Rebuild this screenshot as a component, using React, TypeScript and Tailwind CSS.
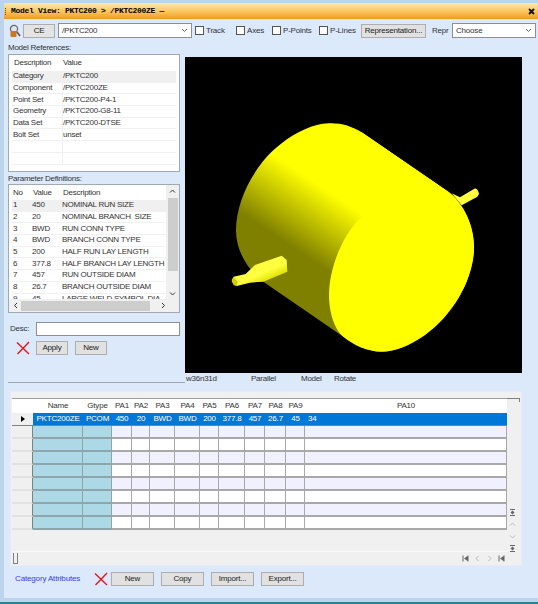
import type { ReactNode } from 'react';

const modelRefs = [
  ['Category', '/PKTC200'],
  ['Component', '/PKTC200ZE'],
  ['Point Set', '/PKTC200-P4-1'],
  ['Geometry', '/PKTC200-G8-11'],
  ['Data Set', '/PKTC200-DTSE'],
  ['Bolt Set', 'unset'],
  ['', ''],
  ['', ''],
];

const params = [
  ['1', '450', 'NOMINAL RUN SIZE'],
  ['2', '20', 'NOMINAL BRANCH  SIZE'],
  ['3', 'BWD', 'RUN CONN TYPE'],
  ['4', 'BWD', 'BRANCH CONN TYPE'],
  ['5', '200', 'HALF RUN LAY LENGTH'],
  ['6', '377.8', 'HALF BRANCH LAY LENGTH'],
  ['7', '457', 'RUN OUTSIDE DIAM'],
  ['8', '26.7', 'BRANCH OUTSIDE DIAM'],
  ['9', '45', 'LARGE WELD SYMBOL DIA'],
];

const gridCols = 'grid grid-cols-[21px_50px_29px_20px_18px_25px_25px_19px_26px_20px_21px_19px_202px]';
const headers = ['', 'Name', 'Gtype', 'PA1', 'PA2', 'PA3', 'PA4', 'PA5', 'PA6', 'PA7', 'PA8', 'PA9', 'PA10'];
const selected = ['', 'PKTC200ZE', 'PCOM', '450', '20', 'BWD', 'BWD', '200', '377.8', '457', '26.7', '45', '34'];

function Btn({ className, children }: { className: string; children: ReactNode }) {
  return (
    <button className={`h-[14px] bg-[#e1e1e1] border border-[#adadad] text-[8px] tracking-[-0.2px] leading-none text-[#222] whitespace-nowrap flex items-center justify-center ${className}`}>
      {children}
    </button>
  );
}

function Check({ label, className }: { label: string; className: string }) {
  return (
    <label className={`flex items-center gap-[2px] text-[8px] tracking-[-0.2px] text-[#333] whitespace-nowrap ${className}`}>
      <span className="w-[9px] h-[9px] bg-white border border-[#555] shrink-0" />
      {label}
    </label>
  );
}

function Combo({ value, className }: { value: string; className: string }) {
  return (
    <div className={`h-[15px] bg-white border border-[#8f8f8f] flex items-center justify-between pl-[3px] pr-[3px] text-[8px] tracking-[-0.2px] text-[#333] ${className}`}>
      <span>{value}</span>
      <svg width="7" height="5" viewBox="0 0 7 5" fill="none" stroke="#666" strokeWidth="1">
        <path d="M1 1l2.5 2.5L6 1" />
      </svg>
    </div>
  );
}

function RedX({ className }: { className: string }) {
  return (
    <svg className={className} width="14" height="14" viewBox="0 0 14 14" fill="none" stroke="#e8141c" strokeWidth="1.4">
      <path d="M1 1.5l12 11.5M13 1L1.5 13" />
    </svg>
  );
}

function Chevron({ d, color = '#333' }: { d: string; color?: string }) {
  return (
    <svg width="7" height="7" viewBox="0 0 7 7" fill="none" stroke={color} strokeWidth="1">
      <path d={d} />
    </svg>
  );
}

function NavEnd({ vertical }: { vertical?: boolean }) {
  return (
    <svg width="7" height="7" viewBox="0 0 7 7" fill="#666">
      {vertical ? <path d="M1 0h5v1H1zM1 6h5v1H1zM3.5 1.5L5.5 3.5L3.5 5.5L1.5 3.5z" /> : <path d="M0.5 0.5h1v6h-1zM5.5 0.5h1v6h-1zM2 3.5L5.5 1v5z" />}
    </svg>
  );
}

function Scene() {
  return (
    <svg className="w-full h-full block" viewBox="0 -129 1011 948">
      <defs>
        <linearGradient id="shell" gradientUnits="userSpaceOnUse" x1="295" y1="185" x2="185" y2="350">
          <stop offset="0" stopColor="#ffff00" />
          <stop offset="1" stopColor="#808000" />
        </linearGradient>
        <linearGradient id="noz" gradientUnits="userSpaceOnUse" x1="215" y1="480" x2="245" y2="545">
          <stop offset="0" stopColor="#ffff40" />
          <stop offset="0.6" stopColor="#ffff40" />
          <stop offset="1" stopColor="#e0e000" />
        </linearGradient>
      </defs>
      <path d="M800 280L825 292L868 266Q878 264 882 282Q878 292 870 294L830 316Z" fill="#ffff40" />
      <path
        d="M430 70C465 68 500 78 530 97L790 275C835 310 867 375 867 440C867 530 810 640 720 705C670 740 625 755 590 755C550 755 505 735 475 710L235 545C195 515 153 460 153 390C153 300 210 190 290 130C335 95 385 72 430 70Z"
        fill="url(#shell)"
      />
      <path
        d="M530 350C470 405 432 510 432 585C432 640 450 690 475 710C505 735 550 755 590 755C625 755 670 740 720 705C810 640 867 530 867 440C867 375 835 310 790 275L530 97L420 200Z"
        fill="#ffff00"
      />
      <path d="M146 530L182 522L210 495L290 467L305 480L307 515L235 545L195 548L155 558L140 545Z" fill="url(#noz)" />
      <path d="M146 530L140 540L146 556L155 558L158 545Z" fill="#d0d000" />
    </svg>
  );
}

export default function App() {
  return (
    <div className="w-[538px] h-[604px] overflow-hidden flex flex-col pt-[3px] bg-[#bcd4ec] font-['Liberation_Sans',sans-serif]">
      {/* title bar */}
      <div className="h-[16px] ml-[4px] flex items-center justify-between pr-[3px] bg-gradient-to-b from-[#fde6b0] via-[#fcc860] to-[#f09a18]">
        <div className="flex items-center">
          <span className="flex flex-col gap-[1px] ml-[1px] mr-[5px]">
            <span className="w-[1px] h-[1px] bg-[#5a4a20]" />
            <span className="w-[1px] h-[1px] bg-[#5a4a20]" />
            <span className="w-[1px] h-[1px] bg-[#5a4a20]" />
            <span className="w-[1px] h-[1px] bg-[#5a4a20]" />
          </span>
          <span className="font-['Liberation_Mono',monospace] font-bold text-[8px] tracking-[-0.3px] text-black whitespace-pre">
            Model View: PKTC200 &gt; /PKTC200ZE —
          </span>
        </div>
        <svg width="7" height="7" viewBox="0 0 7 7" stroke="#111" strokeWidth="1.8">
          <path d="M1 1l5 5M6 1l-5 5" />
        </svg>
      </div>

      <div className="flex-1 ml-[4px] mb-[4px] bg-[#dbe9fb] flex flex-col relative">
        {/* toolbar */}
        <div className="flex items-center h-[15px] mt-[4px]">
          <svg className="ml-[5px]" width="12" height="14" viewBox="0 0 12 14">
            <circle cx="5" cy="5" r="3.6" fill="#dfe6ee" stroke="#667" strokeWidth="1.2" />
            <rect x="1.5" y="7" width="6" height="6" rx="1" fill="#c9772b" />
            <path d="M8 8l3 4" stroke="#555" strokeWidth="1.6" />
          </svg>
          <Btn className="w-[32px] ml-[2px] bg-[#e4e4e4]">CE</Btn>
          <Combo value="/PKTC200" className="w-[134px] ml-[3px]" />
          <Check label="Track" className="ml-[3px] w-[41px]" />
          <Check label="Axes" className="w-[36px]" />
          <Check label="P-Points" className="w-[47px]" />
          <Check label="P-Lines" className="w-[42px]" />
          <Btn className="w-[65px]">Representation...</Btn>
          <span className="text-[8px] tracking-[-0.2px] text-[#333] ml-[6px] w-[20px]">Repr</span>
          <Combo value="Choose" className="w-[84px]" />
        </div>

        {/* main area */}
        <div className="flex mt-[5px] pl-[4px] tracking-[-0.25px]">
          <div className="w-[172px] shrink-0">
            <div className="text-[8px] leading-[10px] mb-px text-[#333]">Model References:</div>
            <div className="h-[118px] bg-white border border-[#a0a8b0] px-[3px] overflow-hidden text-[8px] text-[#333]">
              <div className="flex h-[16px] items-center">
                <span className="w-[51px] shrink-0 pl-[2px]">Description</span>
                <span>Value</span>
              </div>
              {modelRefs.map(([a, b], i) => (
                <div key={i} className={`flex h-[11.7px] items-center border-b border-[#f0f0f0] ${i === 0 ? 'bg-[#f0f0f0]' : ''}`}>
                  <span className="w-[51px] shrink-0 pl-[1px] border-r border-[#f0f0f0]">{a || '\u00a0'}</span>
                  <span>{b}</span>
                </div>
              ))}
            </div>

            <div className="text-[8px] leading-[10px] mt-[2px] text-[#333]">Parameter Definitions:</div>
            <div className="relative h-[129px] bg-white border border-[#a0a8b0] overflow-hidden text-[8px] text-[#333]">
              <div className="flex h-[15px] items-center pl-[4px]">
                <span className="w-[20px] shrink-0">No</span>
                <span className="w-[30px] shrink-0">Value</span>
                <span>Description</span>
              </div>
              <div className="pl-[3px] pr-[13px] h-[102px] overflow-hidden">
                {params.map(([n, v, d], i) => (
                  <div key={n} className={`flex h-[11.7px] items-center whitespace-pre border-b border-[#f0f0f0] ${i === 0 ? 'bg-[#f0f0f0]' : ''}`}>
                    <span className="w-[20px] shrink-0 pl-[1px]">{n}</span>
                    <span className="w-[30px] shrink-0">{v}</span>
                    <span>{d}</span>
                  </div>
                ))}
              </div>
              {/* vertical scrollbar */}
              <div className="absolute right-0 top-0 w-[13px] h-[115px] bg-[#f0f0f0] flex flex-col items-center pt-[3px]">
                <Chevron d="M1 4.5L3.5 2L6 4.5" />
                <span className="w-[10px] h-[73px] mt-[3px] bg-[#cdcdcd]" />
                <span className="mt-[19px]"><Chevron d="M1 2.5L3.5 5L6 2.5" /></span>
              </div>
              {/* horizontal scrollbar */}
              <div className="absolute left-0 right-0 bottom-0 h-[13px] bg-[#f0f0f0] flex items-center px-[4px] gap-[3px]">
                <svg width="5" height="7" viewBox="0 0 5 7" fill="none" stroke="#333"><path d="M4 1L1.5 3.5L4 6" /></svg>
                <span className="w-[129px] h-[10px] bg-[#cdcdcd]" />
                <svg className="ml-[8px]" width="5" height="7" viewBox="0 0 5 7" fill="none" stroke="#333"><path d="M1 1l2.5 2.5L1 6" /></svg>
              </div>
            </div>

            <div className="flex items-center h-[15px] mt-[8px]">
              <span className="w-[28px] pl-[2px] text-[8px] text-[#333]">Desc:</span>
              <div className="w-[144px] h-[14px] bg-white border border-[#8f8f8f]" />
            </div>
            <div className="flex items-center h-[14px] mt-[5px]">
              <RedX className="ml-[8px]" />
              <Btn className="w-[32px] ml-[6px]">Apply</Btn>
              <Btn className="w-[32px] ml-[7px]">New</Btn>
            </div>
          </div>

          <div className="ml-[5px] pt-[14px] flex flex-col">
            <div className="w-[337px] h-[316px] bg-black">
              <Scene />
            </div>
            <div className="h-[11px] flex items-center text-[8px] text-[#333]">
              <span className="w-[66px] pl-[1px]">w36n31d</span>
              <span className="w-[50px]">Parallel</span>
              <span className="w-[33px]">Model</span>
              <span>Rotate</span>
            </div>
          </div>
        </div>

        <div className="w-[177px] ml-[4px] mt-[-2px] border-t border-[#a0a8b0]" />

        {/* data grid */}
        <div className="relative w-[512px] h-[175px] ml-[6px] mt-[8px] bg-[#f0f0f0] border border-[#e4ecf6] pl-[1px] pt-[6px] text-[8px] tracking-[-0.2px] text-[#333]">
          <div className="w-[495px] border-t border-[#a0a0a0]">
            <div className={`${gridCols} h-[14px] bg-white`}>
              {headers.map((h, i) => (
                <span key={i} className="text-center leading-[14px] whitespace-nowrap">{h}</span>
              ))}
            </div>
            <div className={`${gridCols} h-[13px] bg-[#0078d7] text-white border-b border-[#808080]`}>
              {selected.map((c, i) => (
                <span key={i} className={`leading-[12px] whitespace-nowrap ${i === 0 ? 'bg-[#f0f0f0] flex items-center justify-center' : i === 12 ? 'pl-[3px]' : 'text-center'}`}>
                  {i === 0 ? <span className="w-0 h-0 border-y-[3.5px] border-y-transparent border-l-[4px] border-l-black" /> : c}
                </span>
              ))}
            </div>
            {[0, 1, 2, 3, 4, 5, 6, 7].map((r) => (
              <div key={r} className={`${gridCols} h-[13px]`}>
                {headers.map((_, i) => (
                  <span
                    key={i}
                    className={`border-b-2 border-r ${
                      i === 0
                        ? 'bg-[#f0f0f0] border-b-[#e2e2e2] border-r-[#808080]'
                        : i < 3
                          ? 'bg-[#add8e6] border-[#8fa5ac]'
                          : r % 2 === 0
                            ? 'bg-[#f0f0ff] border-[#a8a8a8]'
                            : 'bg-white border-[#a8a8a8]'
                    }`}
                  />
                ))}
              </div>
            ))}
          </div>
          {/* grid scroll controls */}
          <div className="absolute left-[1px] bottom-0 w-[496px] h-[14px] border-t border-[#f8f8f8] flex items-center">
            <span className="w-[5px] h-[11px] border-x border-b border-[#808080] ml-[1px]" />
          </div>
          <span className="absolute top-[6px] right-[1px] w-[13px] h-[4px] border-t border-r border-[#808080]" />
          <div className="absolute right-[5px] top-[117px] flex flex-col items-center gap-[5px]">
            <NavEnd vertical />
            <Chevron d="M1 4.5L3.5 2L6 4.5" color="#bbb" />
            <Chevron d="M1 2.5L3.5 5L6 2.5" color="#bbb" />
            <NavEnd vertical />
          </div>
          <div className="absolute right-[16px] bottom-[3px] flex gap-[5px]">
            <NavEnd />
            <Chevron d="M4.5 1L2 3.5L4.5 6" color="#bbb" />
            <Chevron d="M2.5 1L5 3.5L2.5 6" color="#bbb" />
            <NavEnd />
          </div>
        </div>

        {/* footer */}
        <div className="flex items-center h-[14px] mt-[6px] pl-[11px]">
          <span className="w-[76px] text-[8px] tracking-[-0.15px] text-[#3a3af0] whitespace-nowrap">Category Attributes</span>
          <RedX className="ml-[3px]" />
          <Btn className="w-[43px] ml-[3px]">New</Btn>
          <Btn className="w-[43px] ml-[7px]">Copy</Btn>
          <Btn className="w-[43px] ml-[7px]">Import...</Btn>
          <Btn className="w-[43px] ml-[7px]">Export...</Btn>
        </div>
      </div>
      <div className="h-[2px] bg-[#2c7f95]" />
    </div>
  );
}
